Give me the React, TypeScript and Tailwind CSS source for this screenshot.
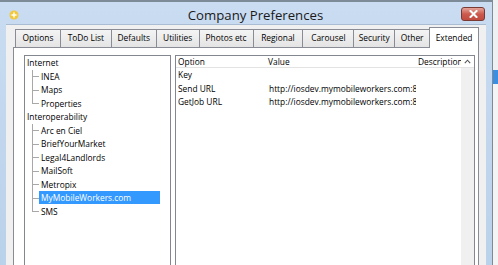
import React from 'react';

const tabs = [
  { label: 'Options', w: 'w-[46px]' },
  { label: 'ToDo List', w: 'w-[52px]' },
  { label: 'Defaults', w: 'w-[46px]' },
  { label: 'Utilities', w: 'w-[44px]' },
  { label: 'Photos etc', w: 'w-[55px]' },
  { label: 'Regional', w: 'w-[51px]' },
  { label: 'Carousel', w: 'w-[52px]' },
  { label: 'Security', w: 'w-[42px]' },
  { label: 'Other', w: 'w-[36px]' },
  { label: 'Extended', w: 'w-[50px]', active: true },
];

const tree = [
  { label: 'Internet', children: ['INEA', 'Maps', 'Properties'] },
  {
    label: 'Interoperability',
    children: ['Arc en Ciel', 'BriefYourMarket', 'Legal4Landlords', 'MailSoft', 'Metropix', 'MyMobileWorkers.com', 'SMS'],
  },
];

// values are cut by the column edge, as in the real grid
const rows = [
  { option: 'Key', value: '' },
  { option: 'Send URL', value: 'http://iosdev.mymobileworkers.com:8' },
  { option: 'GetJob URL', value: 'http://iosdev.mymobileworkers.com:8' },
];

const selected = 'MyMobileWorkers.com';

function TitleIcon() {
  return (
    <svg width="10" height="10" viewBox="0 0 10 10">
      <circle cx="5" cy="5" r="4.5" fill="#f3c73a" />
      <path d="M5 1.2 L6 4 L8.8 5 L6 6 L5 8.8 L4 6 L1.2 5 L4 4 Z" fill="#fffbe6" />
    </svg>
  );
}

function CloseButton() {
  return (
    <div className="w-[24px] h-[14px] rounded-[3px] border border-[#7a3a34] bg-gradient-to-b from-[#e4a49a] via-[#cc5a4e] to-[#c24b40] flex items-center justify-center">
      <svg width="9" height="8" viewBox="0 0 9 8">
        <path d="M1.5 1 L7.5 7 M7.5 1 L1.5 7" stroke="#fff" strokeWidth="2" strokeLinecap="square" />
      </svg>
    </div>
  );
}

function TreeChild({ label, last }: { label: string; last: boolean }) {
  const isSel = label === selected;
  return (
    <div className="flex h-[13.5px] items-center">
      <div className="relative w-[14px] h-full shrink-0">
        <div className={`absolute left-[7px] top-0 w-px bg-[#a8a8a8] ${last ? 'h-1/2' : 'h-full'}`} />
        <div className="absolute left-[7px] top-1/2 w-[7px] h-px bg-[#a8a8a8]" />
      </div>
      <span
        className={`px-[2px] h-[13px] leading-[13px] whitespace-nowrap ${
          isSel ? 'bg-[#3399ff] text-white w-[121px]' : 'text-black'
        }`}
      >
        {label}
      </span>
    </div>
  );
}

function TreePanel() {
  return (
    <div className="w-[147px] h-[230px] shrink-0 border border-[#828790] bg-white">
      {tree.map((node) => (
        <div key={node.label}>
          <div className="h-[13.5px] leading-[13.5px] pl-[2px] text-black whitespace-nowrap">{node.label}</div>
          {node.children.map((c, i) => (
            <TreeChild key={c} label={c} last={i === node.children.length - 1} />
          ))}
        </div>
      ))}
    </div>
  );
}

function GridPanel() {
  return (
    <div className="w-[300px] h-[230px] shrink-0 border border-[#828790] bg-white flex flex-col">
      <div className="flex h-[12px] border-b border-[#e3e3e3] leading-[11px] text-black">
        <div className="w-[90px] pl-[2px]">Option</div>
        <div className="w-[150px] pl-[2px]">Value</div>
        <div className="w-[45px] pl-[2px] overflow-hidden whitespace-nowrap">Description</div>
        <div className="flex-1 flex items-center justify-center">
          <svg width="7" height="5" viewBox="0 0 7 5">
            <path d="M0.8 4.2 L3.5 1.2 L6.2 4.2" fill="none" stroke="#555" strokeWidth="1.1" />
          </svg>
        </div>
      </div>
      <div className="flex-1 flex">
        <div className="flex-1 bg-white">
          {rows.map((r) => (
            <div key={r.option} className="flex h-[13.5px] leading-[13.5px] text-black">
              <div className="w-[90px] pl-[2px] whitespace-nowrap">{r.option}</div>
              <div className="w-[150px] pl-[3px] overflow-hidden whitespace-nowrap">{r.value}</div>
            </div>
          ))}
        </div>
        <div className="w-[13px] bg-[#f0f0f0]" />
      </div>
    </div>
  );
}

export default function App() {
  return (
    <div className="w-[498px] h-[265px] overflow-hidden flex bg-[#e9ecef] text-[8.4px] font-['Open_Sans',sans-serif]">
      <div className="w-[493px] h-[300px] shrink-0 flex flex-col border-t-2 border-r border-[#7d8b99] bg-gradient-to-b from-[#c9dcf1] to-[#b8d0ea]">
        <div className="h-[23px] flex items-start">
          <div className="pl-[9px] pt-[8px]">
            <TitleIcon />
          </div>
          <div className="flex-1 text-center pl-[31px] pt-[4px] text-[13.2px] leading-[18px] text-[#1a1a1a]">
            Company Preferences
          </div>
          <div className="pt-[5px] pr-[7px]">
            <CloseButton />
          </div>
        </div>
        <div className="mx-[6px] flex-1 bg-[#f0f0f0] border-t border-[#a9bcd1] px-[7px] pt-[1px]">
          <div className="flex items-end h-[21px] pl-[2px]">
            {tabs.map((t, i) =>
              t.active ? (
                <div
                  key={t.label}
                  className={`${t.w} h-[21px] -mb-px relative z-10 -ml-px border border-b-0 border-[#898c95] bg-white flex items-center justify-center text-black whitespace-nowrap`}
                >
                  {t.label}
                </div>
              ) : (
                <div
                  key={t.label}
                  className={`${t.w} h-[18px] ${i > 0 ? '-ml-px' : ''} border border-b-0 border-[#898c95] bg-gradient-to-b from-[#f4f4f4] to-[#e4e4e4] flex items-center justify-center text-black whitespace-nowrap`}
                >
                  {t.label}
                </div>
              )
            )}
          </div>
          <div className="w-[466px] h-[260px] border border-[#898c95] bg-white flex pt-[7px] pl-[10px]">
            <TreePanel />
            <div className="ml-[4px]">
              <GridPanel />
            </div>
          </div>
        </div>
      </div>
      <div className="flex-1 flex flex-col">
        <div className="h-[70px] bg-[#eef0f2]" />
        <div className="h-[14px] bg-[#3c8ee0]" />
        <div className="flex-1 bg-[#f4f4f4]" />
      </div>
    </div>
  );
}
